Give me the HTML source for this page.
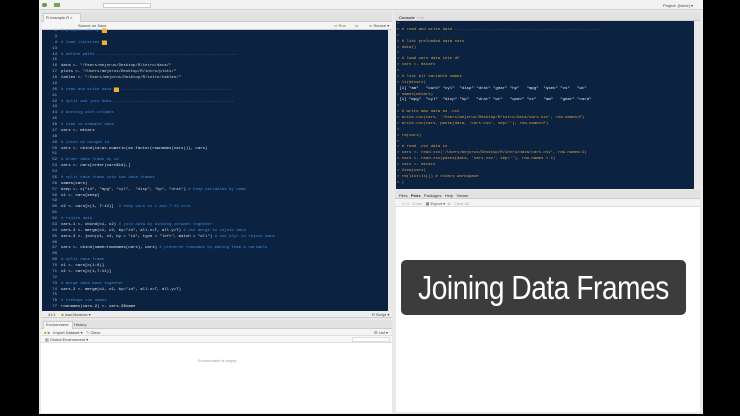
<!DOCTYPE html>
<html><head><meta charset="utf-8">
<style>
*{margin:0;padding:0;box-sizing:border-box}
body{width:740px;height:416px;background:#000;position:relative;overflow:hidden;font-family:"Liberation Sans",sans-serif}
.a{position:absolute}
.win{left:39px;top:0;width:664px;height:414px;background:#e9e9e9}
.code{font-family:"Liberation Mono",monospace;font-size:4px;line-height:5.88px;white-space:pre;color:#e6e6e6}
.c{color:#3f8fe0}
.s{color:#d8d8c0}
.n{color:#9fb3c8}
.y{background:#e8b23a;color:#e8b23a}
.o{color:#e8a23c}
.small{font-size:4px;color:#444;white-space:nowrap}
</style></head><body>
<div class="a win"></div>
<!-- top toolbar -->
<div class="a" style="left:39px;top:0;width:664px;height:10px;background:#f2f2f2;border-bottom:1px solid #d0d0d0"></div>
<div class="a" style="left:42px;top:3px;width:5px;height:4px;background:#6b9b4a;border-radius:2px"></div>
<div class="a" style="left:54px;top:3px;width:6px;height:4px;background:#7ba25a"></div>
<div class="a" style="left:103px;top:3px;width:48px;height:5px;background:#fff;border:1px solid #ccc"></div>
<div class="a small" style="left:663px;top:3px">Project: (None) ▾</div>

<!-- editor pane -->
<div class="a" style="left:41px;top:12px;width:351px;height:10px;background:#e2e2e2;border-bottom:1px solid #ccc"></div>
<div class="a" style="left:43px;top:13px;width:38px;height:9px;background:#f5f5f5;border:1px solid #ccc;border-bottom:none"></div>
<div class="a small" style="left:46px;top:15px">R example.R ×</div>
<div class="a" style="left:41px;top:22px;width:351px;height:8px;background:#f4f4f4;border-bottom:1px solid #ccc"></div>
<div class="a small" style="left:78px;top:23px">Source on Save</div>
<div class="a small" style="left:334px;top:23px;color:#4a8a3a">⇨ Run</div>
<div class="a small" style="left:355px;top:23px">⇦</div>
<div class="a small" style="left:369px;top:23px">⇨ Source ▾</div>
<div class="a" style="left:42px;top:30px;width:346px;height:281px;background:#0b2240"></div>
<div class="a" style="left:388px;top:30px;width:4px;height:281px;background:#e8e8e8"></div>
<div class="a code n" style="left:42px;top:29px;width:15px;text-align:right">1
3
4
13
14
15
16
17
18
19
20
41
42
43
44
45
46
47
48
49
50
51
52
53
54
55
56
57
58
59
60
61
62
63
64
65
66
67
68
69
70
71
72
73
74
75
76
77</div>
<div class="a code" style="left:61px;top:29px"><span class="c"># project set up</span> <span class="y">▆▆</span>

<span class="c"># load libraries</span> <span class="y">▆▆</span>

<span class="c"># define paths ----------------------------------------------------------</span>

data <- <span class="s">"/Users/mejorus/Desktop/R/intro/data/"</span>
plots <- <span class="s">"/Users/mejorus/Desktop/R/intro/plots/"</span>
tables <- <span class="s">"/Users/mejorus/Desktop/R/intro/tables/"</span>

<span class="c"># read and write data</span> <span class="y">▆▆</span><span class="c"> ----------------------------------------------</span>

<span class="c"># split and join data --------------------------------------------------</span>

<span class="c"># working with columns</span>

<span class="c"># read in example data</span>
cars <- mtcars

<span class="c"># (bind an unique id</span>
cars <- cbind(id=as.numeric(as.factor(rownames(cars))), cars)

<span class="c"># order data frame by id</span>
cars <- cars[order(cars$id),]

<span class="c"># split data frame into two data frames</span>
names(cars)
keep <- c(<span class="s">"id", "mpg", "cyl",  "disp", "hp", "drat"</span>) <span class="c"># keep variables by name</span>
c1 <- cars[keep]

c2 <- cars[c(1, 7:12)]  <span class="c"># keep vars in 1 and 7:12 cols</span>

<span class="c"># rejoin data</span>
cars.1 <- cbind(c1, c2) <span class="c"># join data by binding columns together</span>
cars.2 <- merge(c1, c2, by=<span class="s">"id"</span>, all.x=T, all.y=T) <span class="c"># use merge to rejoin data</span>
cars.3 <- join(c1, c2, by = <span class="s">"id"</span>, type = <span class="s">"left"</span>, match = <span class="s">"all"</span>) <span class="c"># use plyr to rejoin data</span>

cars <- cbind(name=rownames(cars), cars) <span class="c"># preserve rownames by making them a variable</span>

<span class="c"># split data frame</span>
c1 <- cars[c(1:6)]
c2 <- cars[c(1,7:11)]

<span class="c"># merge data back together</span>
cars.2 <- merge(c1, c2, by=<span class="s">"id"</span>, all.x=T, all.y=T)

<span class="c"># reshape row names</span>
rownames(cars.2) <- cars.2$name</div>
<div class="a" style="left:41px;top:311px;width:351px;height:7px;background:#eee;border-bottom:1px solid #ccc"></div>
<div class="a small" style="left:48px;top:312px">41:1 &nbsp;&nbsp;&nbsp;&nbsp;<span style="color:#b08a20">■</span> load libraries ▾</div>
<div class="a small" style="left:372px;top:312px">R Script ▾</div>

<!-- environment pane -->
<div class="a" style="left:41px;top:320px;width:351px;height:9px;background:#e2e2e2;border-bottom:1px solid #ccc"></div>
<div class="a" style="left:43px;top:321px;width:30px;height:8px;background:#f5f5f5;border:1px solid #ccc;border-bottom:none"></div>
<div class="a small" style="left:46px;top:322px">Environment &nbsp;&nbsp;&nbsp; History</div>
<div class="a" style="left:41px;top:329px;width:351px;height:7px;background:#f4f4f4;border-bottom:1px solid #ddd"></div>
<div class="a small" style="left:44px;top:330px"><span style="color:#c9a030">■</span> <span style="color:#789">■</span> &nbsp;&nbsp;Import Dataset ▾ &nbsp;&nbsp;<span style="color:#9a3">✎</span> Clear</div>
<div class="a small" style="left:374px;top:330px">☰ List ▾</div>
<div class="a" style="left:41px;top:336px;width:351px;height:7px;background:#f7f7f7;border-bottom:1px solid #ddd"></div>
<div class="a small" style="left:45px;top:337px">▤ Global Environment ▾</div>
<div class="a" style="left:352px;top:337px;width:38px;height:5px;background:#fff;border:1px solid #ddd"></div>
<div class="a" style="left:41px;top:343px;width:351px;height:70px;background:#fff"></div>
<div class="a small" style="left:198px;top:358px;color:#999">Environment is empty</div>

<!-- console -->
<div class="a" style="left:395px;top:12px;width:305px;height:9px;background:#e2e2e2;border-bottom:1px solid #ccc"></div>
<div class="a small" style="left:399px;top:15px;font-weight:bold">Console <span style="font-weight:normal;color:#888">~/ ⇨</span></div>
<div class="a" style="left:396px;top:21px;width:298px;height:168px;background:#0b2240"></div>
<div class="a" style="left:694px;top:21px;width:5px;height:168px;background:#e8e8e8"></div>
<div class="a code o" style="left:397px;top:22px">&gt;
&gt; # read and write data <span style="color:#8a7a5a">-------------------------------------------------------------</span>
&gt;
&gt; # list preloaded data sets
&gt; data()
&gt;
&gt; # load cars data into df
&gt; cars &lt;- mtcars
&gt;
&gt; # list all variable names
&gt; ls(mtcars)
<span style="color:#f0f0f0"> [1] "am"   "carb" "cyl"  "disp" "drat" "gear" "hp"   "mpg"  "qsec" "vs"   "wt"</span>
&gt; names(mtcars)
<span style="color:#f0f0f0"> [1] "mpg"  "cyl"  "disp" "hp"   "drat" "wt"   "qsec" "vs"   "am"   "gear" "carb"</span>
&gt;
&gt; # write mas data as .csv
&gt; write.csv(cars, '/Users/mejorus/Desktop/R/intro/data/cars.csv', row.names=F)
&gt; write.csv(cars, paste(data, 'cars.csv', sep=''), row.names=F)
&gt;
&gt; rm(cars)
&gt;
&gt; # read .csv data in
&gt; cars &lt;- read.csv('/Users/mejorus/Desktop/R/intro/data/cars.csv', row.names=1)
&gt; cars &lt;- read.csv(paste(data, 'cars.csv', sep=''), row.names = 1)
&gt; cars &lt;- mtcars
&gt; View(cars)
&gt; rm(list=ls()) # clears workspace
&gt; |</div>

<!-- files / plots pane -->
<div class="a" style="left:395px;top:190px;width:305px;height:9px;background:#e2e2e2;border-bottom:1px solid #ccc"></div>
<div class="a small" style="left:399px;top:193px;color:#333">Files &nbsp;&nbsp;<b>Plots</b> &nbsp;&nbsp;Packages &nbsp;&nbsp;Help &nbsp;&nbsp;Viewer</div>
<div class="a" style="left:395px;top:199px;width:305px;height:8px;background:#f4f4f4;border-bottom:1px solid #ddd"></div>
<div class="a small" style="left:402px;top:201px;color:#aaa">⇦ ⇨ &nbsp;Zoom &nbsp;&nbsp;<span style="color:#555">▦ Export ▾</span> &nbsp;⊗ &nbsp;&nbsp;Clear All</div>
<div class="a" style="left:396px;top:207px;width:304px;height:205px;background:#fff"></div>

<!-- title overlay -->
<div class="a" style="left:401px;top:260px;width:285px;height:55px;background:#3c3c3c;border-radius:5px"></div>
<div class="a" style="left:381px;top:263px;width:325px;height:50px;color:#fff;font-size:33px;line-height:50px;text-align:center;white-space:nowrap;letter-spacing:-0.5px;font-family:'Liberation Sans','DejaVu Sans',sans-serif;transform:scaleX(0.85);transform-origin:center">Joining Data Frames</div>
</body></html>
